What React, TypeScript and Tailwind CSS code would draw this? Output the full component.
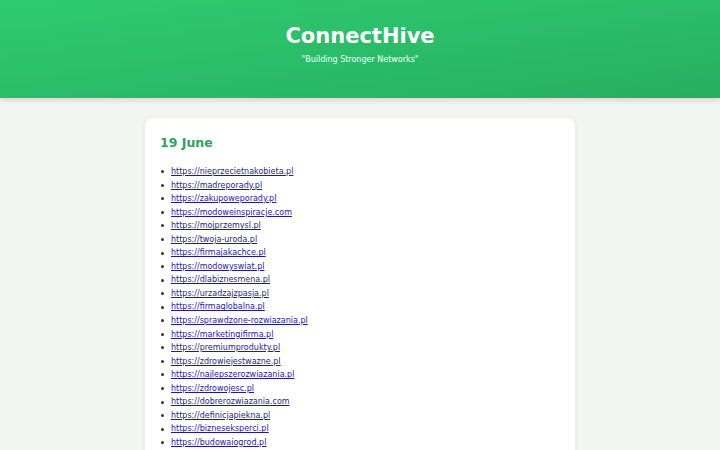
const links = [
  "https://nieprzecietnakobieta.pl",
  "https://madreporady.pl",
  "https://zakupoweporady.pl",
  "https://modoweinspiracje.com",
  "https://mojprzemysl.pl",
  "https://twoja-uroda.pl",
  "https://firmajakachce.pl",
  "https://modowyswiat.pl",
  "https://dlabiznesmena.pl",
  "https://urzadzajzpasja.pl",
  "https://firmaglobalna.pl",
  "https://sprawdzone-rozwiazania.pl",
  "https://marketingifirma.pl",
  "https://premiumprodukty.pl",
  "https://zdrowiejestwazne.pl",
  "https://najlepszerozwiazania.pl",
  "https://zdrowojesc.pl",
  "https://dobrerozwiazania.com",
  "https://definicjapiekna.pl",
  "https://bizneseksperci.pl",
  "https://budowaiogrod.pl",
];

export default function App() {
  return (
    <div className="min-h-screen bg-[#f2f6f3] font-['DejaVu_Sans',sans-serif]">
      <header className="h-[98px] bg-gradient-to-br from-[#2ecc71] to-[#27ae60] text-center text-white shadow-[0_2px_6px_rgba(0,0,0,0.15)]">
        <h1 className="pt-[22px] text-[21px] font-bold leading-[28px]">ConnectHive</h1>
        <p className="mt-[4px] text-[8px] leading-[12px]">"Building Stronger Networks"</p>
      </header>

      <main className="mx-auto mt-[20px] w-[430px] rounded-lg bg-white px-[15px] pt-[16px] pb-4 shadow-[0_1px_6px_rgba(0,0,0,0.08)]">
        <h2 className="text-[12.5px] font-bold leading-[18px] text-[#2aa460]">19 June</h2>
        <ul className="mt-[13px] text-[8px] leading-[13.55px]">
          {links.map((l) => (
            <li key={l} className="flex items-center">
              <span className="ml-[0.5px] mr-[7.5px] h-[3px] w-[3px] rounded-full bg-[#333]" />
              <a href={l} className="text-[#1e1a9e] underline">
                {l}
              </a>
            </li>
          ))}
        </ul>
      </main>
    </div>
  );
}
